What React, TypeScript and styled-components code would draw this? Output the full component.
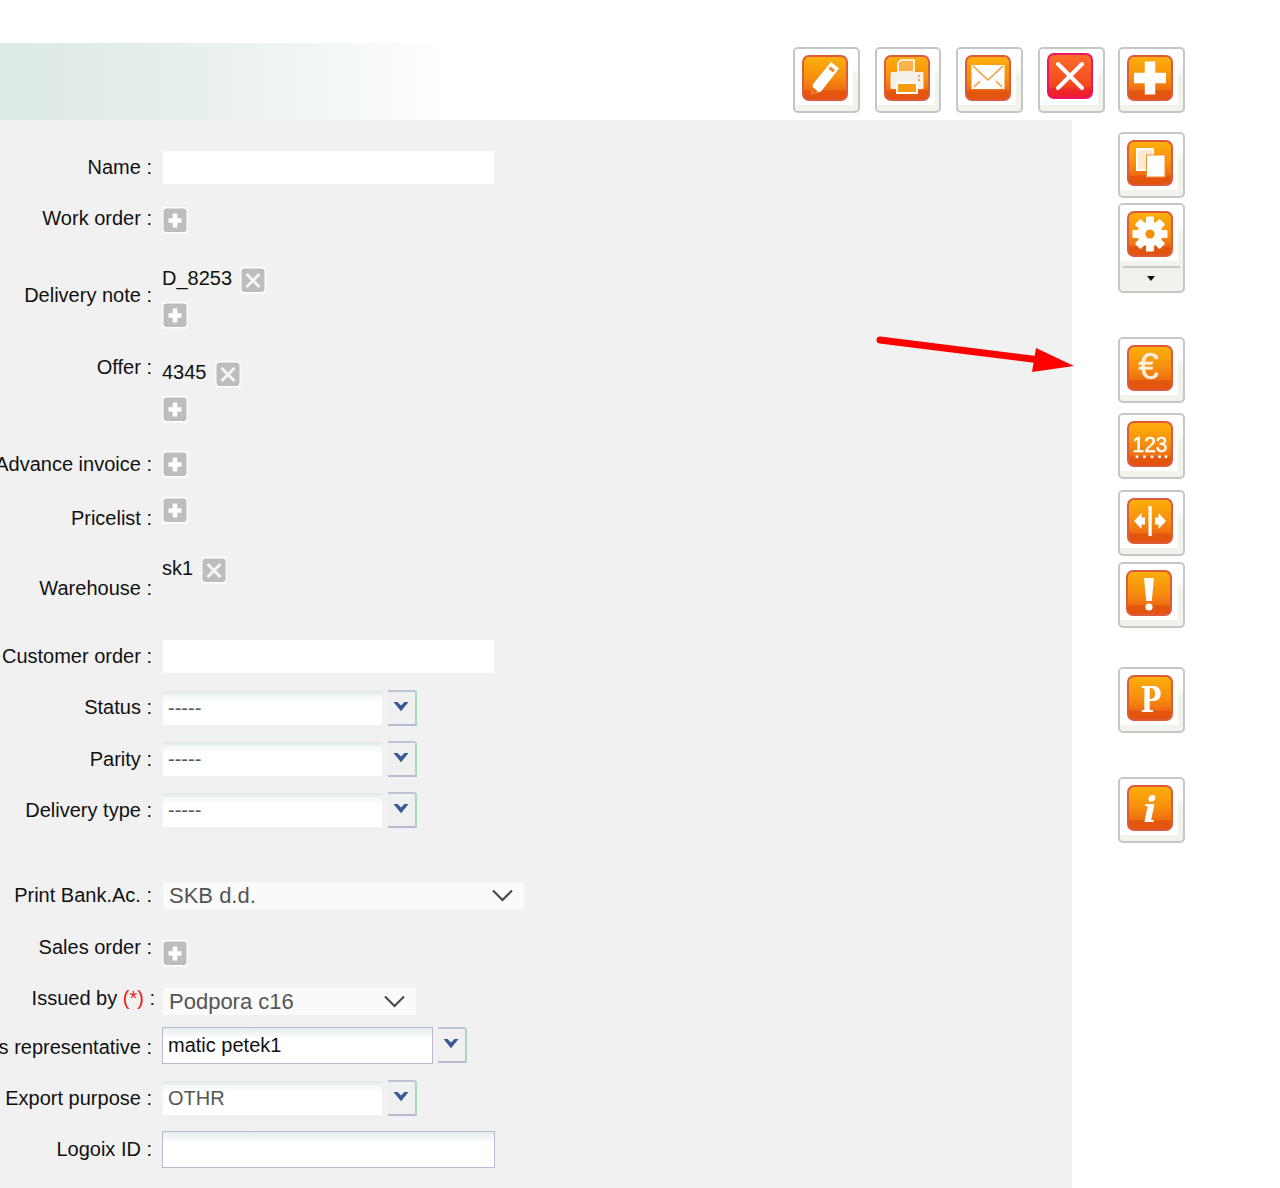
import React from 'react';
import styled, { createGlobalStyle } from 'styled-components';

const Global = createGlobalStyle`
  html, body { margin: 0; padding: 0; background: #fff; }
  body { font-family: "Liberation Sans", Arial, sans-serif; color: #111; }
`;

const Page = styled.div`
  position: relative;
  width: 1280px;
  height: 1188px;
  overflow: hidden;
  background: #fff;
`;
const Header = styled.header`
  display: flex;
  height: 120px;
`;
const Band = styled.div`
  width: 445px;
  margin-top: 43px;
  background: linear-gradient(to right, #dde9e6 0%, #e8f0ed 45%, #f5f9f7 80%, #ffffff 100%);
`;
const Toolbar = styled.div`
  display: flex;
  gap: 15px;
  margin-left: auto;
  padding: 47px 95px 0 0;
  align-items: flex-start;
`;
const Body = styled.div`
  display: flex;
`;
const Panel = styled.main`
  width: 1072px;
  height: 1068px;
  box-sizing: border-box;
  padding-top: 31px;
  background: #f1f1f1;
`;
const Side = styled.aside`
  display: flex;
  flex-direction: column;
  align-items: flex-start;
  margin-left: 46px;
  padding-top: 12px;
`;

const ToolButton = styled.div<{ $width?: number; $mt?: number; $ml?: number }>`
  box-sizing: border-box;
  width: ${p => p.$width ?? 67}px;
  height: 66px;
  margin-top: ${p => p.$mt ?? 0}px;
  margin-left: ${p => p.$ml ?? 0}px;
  flex: none;
  border: 2px solid #c6c6c6;
  border-radius: 5px;
  background: linear-gradient(to bottom, #fff 0 28%, #f0f2ec 45%, #f1f3ec 100%);
  overflow: hidden;
`;
const Face = styled.div<{ $left?: number; $top?: number }>`
  box-sizing: border-box;
  width: 58px;
  height: 56px;
  padding: ${p => p.$top ?? 6}px 0 0 ${p => p.$left ?? 7}px;
  background: #fff;
`;
const MenuButton = styled(ToolButton)`
  height: 90px;
  background: #f1f2ec;
`;
const MenuTop = styled.div`
  height: 61px;
  background: linear-gradient(to bottom, #fff 0 30%, #f0f2ec 50%, #f1f3ec 100%);
`;
const MenuDivider = styled.div`
  height: 2px;
  margin: 0 3px;
  background: #c9c9c9;
`;
const Caret = styled.div`
  width: 0;
  height: 0;
  margin: 8px 0 0 27px;
  border-left: 4px solid transparent;
  border-right: 4px solid transparent;
  border-top: 5px solid #111;
`;

const Row = styled.div<{ $mt: number; $h: number }>`
  display: grid;
  grid-template-columns: 152px 1fr;
  column-gap: 10px;
  margin-top: ${p => p.$mt}px;
  height: ${p => p.$h}px;
`;
const Label = styled.label<{ $top: number; $nudge?: number }>`
  display: flex;
  justify-content: flex-end;
  white-space: pre;
  height: 24px;
  margin-top: ${p => p.$top}px;
  margin-right: ${p => -(p.$nudge ?? 0)}px;
  font-size: 20px;
  line-height: 24px;
  color: #111;
`;
const Required = styled.span`
  color: #f01818;
`;
const Stack = styled.div`
  display: flex;
  flex-direction: column;
  align-items: flex-start;
  gap: 9px;
`;
const Inline = styled.div`
  display: flex;
  align-items: center;
  height: 26px;
`;
const ValueText = styled.span`
  margin: 0 8px 5px 0;
  font-size: 20px;
  line-height: 24px;
  color: #111;
`;
const PlainInput = styled.div`
  width: 331px;
  height: 33px;
  margin-left: 1px;
  background: #fff;
`;
const Combo = styled.div`
  display: flex;
  align-items: flex-start;
`;
const ComboField = styled.div`
  box-sizing: border-box;
  width: 219px;
  height: 34px;
  margin: 1px 0 0 1px;
  padding-left: 5px;
  font-size: 20px;
  line-height: 35px;
  color: #555;
  background: linear-gradient(to bottom, #dde5e5 0, #f4f8f8 5px, #fff 12px);
`;
const BorderedField = styled.div<{ $width: number }>`
  box-sizing: border-box;
  width: ${p => p.$width}px;
  height: 37px;
  padding-left: 5px;
  border: 1.5px solid #b7bad0;
  font-size: 20px;
  line-height: 35px;
  color: #111;
  background: linear-gradient(to bottom, #e6ecec 0, #fff 11px);
`;
const ComboButton = styled.div<{ $ml: number }>`
  display: flex;
  align-items: center;
  justify-content: center;
  box-sizing: border-box;
  width: 29px;
  height: 36px;
  margin-left: ${p => p.$ml}px;
  padding: 0 2px 3px 0;
  border-top: 2px solid #c0c3d6;
  border-bottom: 2px solid #b7bad0;
  border-right: 2px solid #a3dbb3;
  border-top-right-radius: 3px;
  background: #f0f0f0;
`;
const NativeSelect = styled.div<{ $width: number }>`
  display: flex;
  align-items: center;
  justify-content: space-between;
  box-sizing: border-box;
  width: ${p => p.$width}px;
  height: 27px;
  margin-left: 1px;
  padding: 0 11px 0 6px;
  font-size: 22px;
  line-height: 27px;
  color: #555;
  background: #fafafa;
`;
const Arrow = styled.svg`
  position: absolute;
  left: 870px;
  top: 330px;
`;
const FieldIcon = styled.svg<{ $lift?: number }>`
  display: block;
  flex: none;
  margin-top: ${p => -(p.$lift ?? 0)}px;
  filter: blur(0.3px);
`;
const ChevronIcon = styled.svg`
  display: block;
  flex: none;
`;
const ButtonIcon = styled.svg`
  display: block;
  filter: blur(0.4px);
`;

const SmallIcon = ({ kind, lift }: { kind: 'plus' | 'x'; lift?: number }) => (
  <FieldIcon width="26" height="27" viewBox="0 0 26 27" $lift={lift}>
    <rect x="0.5" y="0" width="25" height="26.5" fill="#fff" />
    <rect x="1.5" y="1.5" width="23" height="23.5" rx="3" fill="#bdbdbd" />
    {kind === 'plus' ? (
      <path d="M13 6.5v14M6.5 13.5h13" stroke="#fff" strokeWidth="4.6" fill="none" />
    ) : (
      <path d="M6.5 7l13 13M19.5 7L6.5 20" stroke="#f6f6f6" strokeWidth="3" fill="none" />
    )}
  </FieldIcon>
);

const Chevron = () => (
  <ChevronIcon width="16" height="11" viewBox="0 0 16 11">
    <path d="M0.5 1h4L8 4.6 11.5 1h4L8 10.2z" fill="#3a5893" />
  </ChevronIcon>
);
const ThinChevron = () => (
  <ChevronIcon width="21" height="13" viewBox="0 0 21 13">
    <path d="M1 1.5l9.5 9.5L20 1.5" stroke="#444" strokeWidth="2" fill="none" />
  </ChevronIcon>
);

const Glyphs: Record<string, React.ReactNode> = {
  pencil: (
    <g>
      <path d="M29 7l8 6.5-18 23-10 3 2-10.5z" fill="#fff" />
      <path d="M28.5 11.5l4.5 3.6-2 2.4-4.5-3.6z" fill="#f58a2a" />
      <path d="M9 39.5l1.2-8 6.2 5.4z" fill="#ee6a14" />
    </g>
  ),
  printer: (
    <g>
      <path d="M14 8l3-3h13v12H14z" fill="#f9b24c" stroke="#fff" strokeWidth="1.6" />
      <rect x="6.5" y="17" width="33" height="17" rx="1.5" fill="#f4f1ea" />
      <circle cx="35" cy="21" r="1" fill="#f18a2a" />
      <circle cx="35" cy="25" r="1" fill="#f18a2a" />
      <rect x="12" y="27" width="22" height="12" fill="#fff" />
      <rect x="14" y="29" width="18" height="8" fill="#fb9c10" />
    </g>
  ),
  mail: (
    <g>
      <rect x="6.5" y="10" width="33" height="24" fill="#fff" />
      <path d="M8 11l15 14 15-14M9 32l6-6M37 32l-6-6" stroke="#f59a3e" strokeWidth="1.6" fill="none" />
    </g>
  ),
  x: <path d="M11 11l24 24M35 11L11 35" stroke="#fff" strokeWidth="4" strokeLinecap="round" fill="none" />,
  plus: <path d="M23 6.5v33M7 23h32" stroke="#fff" strokeWidth="10.5" fill="none" />,
  copy: (
    <g>
      <rect x="10" y="9" width="16" height="21" fill="#fde8d0" stroke="#fff" strokeWidth="2" />
      <rect x="19.5" y="15" width="18.5" height="22" fill="#fff" stroke="#f29033" strokeWidth="1" />
    </g>
  ),
  gear: (
    <g>
      {[0, 45, 90, 135].map(a => (
        <rect key={a} x="19" y="5.5" width="8" height="35" rx="1" fill="#fff" transform={`rotate(${a} 23 23)`} />
      ))}
      <circle cx="23" cy="23" r="12.5" fill="#fff" />
      <circle cx="23" cy="23" r="4.6" fill="#f68f0c" />
    </g>
  ),
  euro: (
    <text x="21.5" y="34" textAnchor="middle" fontFamily="Liberation Sans, sans-serif" fontSize="37" fill="#fdeede" stroke="#fdeede" strokeWidth="0.4">
      €
    </text>
  ),
  numbers: (
    <g>
      <text x="23" y="31" textAnchor="middle" fontFamily="Liberation Sans, sans-serif" fontSize="22" fill="#fff" stroke="#fff" strokeWidth="0.5" textLength="35" lengthAdjust="spacingAndGlyphs">
        123
      </text>
      {[10, 17.5, 25, 32.5, 39].map(x => (
        <rect key={x} x={x - 1.3} y="34.5" width="2.6" height="2.6" fill="#fff" />
      ))}
    </g>
  ),
  split: (
    <g>
      <rect x="21.5" y="8" width="3.2" height="30" fill="#fff" />
      <path d="M7 23l7.5-8v4.5H18v7h-3.5V31zM39 23l-7.5-8v4.5H28v7h3.5V31z" fill="#fff" />
    </g>
  ),
  alert: (
    <g>
      <path d="M18 8h10l-2.2 23h-5.6z" fill="#fff" />
      <circle cx="23" cy="37" r="3.6" fill="#fff" />
    </g>
  ),
  p: (
    <text x="24" y="37" textAnchor="middle" fontFamily="DejaVu Serif, serif" fontWeight="700" fontSize="36" fill="#fff" textLength="21" lengthAdjust="spacingAndGlyphs">
      P
    </text>
  ),
  info: (
    <text x="23" y="37" textAnchor="middle" fontFamily="DejaVu Serif, serif" fontWeight="700" fontStyle="italic" fontSize="36" fill="#fff">
      i
    </text>
  ),
};

const OrangeIcon = ({ name, red }: { name: string; red?: boolean }) => {
  const id = `grad-${name}`;
  return (
    <ButtonIcon width="46" height="46" viewBox="0 0 46 46">
      <defs>
        <linearGradient id={id} x1="0" y1="0" x2="0" y2="1">
          {red ? (
            <>
              <stop offset="0" stopColor="#fb6f2b" />
              <stop offset="0.72" stopColor="#f4481d" />
              <stop offset="0.8" stopColor="#ef2a25" />
              <stop offset="1" stopColor="#ee1830" />
            </>
          ) : (
            <>
              <stop offset="0" stopColor="#fdb00c" />
              <stop offset="0.5" stopColor="#f68e0e" />
              <stop offset="0.76" stopColor="#ee6f12" />
              <stop offset="0.8" stopColor="#e3560e" />
              <stop offset="1" stopColor="#e2540e" />
            </>
          )}
        </linearGradient>
      </defs>
      <rect x="1" y="1" width="44" height="44" rx="6" fill={`url(#${id})`} stroke={red ? '#ef1463' : '#de5a3c'} strokeWidth="2" />
      {Glyphs[name]}
    </ButtonIcon>
  );
};

export default function App() {
  return (
    <Page>
      <Global />
      <Header>
        <Band />
        <Toolbar>
          <ToolButton><Face><OrangeIcon name="pencil" /></Face></ToolButton>
          <ToolButton $width={66}><Face><OrangeIcon name="printer" /></Face></ToolButton>
          <ToolButton><Face><OrangeIcon name="mail" /></Face></ToolButton>
          <ToolButton><Face $top={4}><OrangeIcon name="x" red /></Face></ToolButton>
          <ToolButton $ml={-2}><Face><OrangeIcon name="plus" /></Face></ToolButton>
        </Toolbar>
      </Header>
      <Body>
        <Panel>
          <Row $mt={0} $h={33}>
            <Label $top={4}>Name :</Label>
            <PlainInput />
          </Row>
          <Row $mt={24} $h={26}>
            <Label $top={-2}>Work order :</Label>
            <SmallIcon kind="plus" lift={1} />
          </Row>
          <Row $mt={33} $h={62}>
            <Label $top={16}>Delivery note :</Label>
            <Stack>
              <Inline><ValueText>D_8253</ValueText><SmallIcon kind="x" /></Inline>
              <SmallIcon kind="plus" />
            </Stack>
          </Row>
          <Row $mt={32} $h={62}>
            <Label $top={-6}>Offer :</Label>
            <Stack>
              <Inline><ValueText>4345</ValueText><SmallIcon kind="x" /></Inline>
              <SmallIcon kind="plus" />
            </Stack>
          </Row>
          <Row $mt={29} $h={26}>
            <Label $top={0}>Advance invoice :</Label>
            <SmallIcon kind="plus" lift={1} />
          </Row>
          <Row $mt={20} $h={26}>
            <Label $top={8}>Pricelist :</Label>
            <SmallIcon kind="plus" lift={1} />
          </Row>
          <Row $mt={33} $h={26}>
            <Label $top={19}>Warehouse :</Label>
            <Inline><ValueText>sk1</ValueText><SmallIcon kind="x" /></Inline>
          </Row>
          <Row $mt={57} $h={33}>
            <Label $top={4}>Customer order :</Label>
            <PlainInput />
          </Row>
          <Row $mt={17} $h={36}>
            <Label $top={5}>Status :</Label>
            <Combo><ComboField>-----</ComboField><ComboButton $ml={6}><Chevron /></ComboButton></Combo>
          </Row>
          <Row $mt={15} $h={36}>
            <Label $top={6}>Parity :</Label>
            <Combo><ComboField>-----</ComboField><ComboButton $ml={6}><Chevron /></ComboButton></Combo>
          </Row>
          <Row $mt={15} $h={36}>
            <Label $top={6}>Delivery type :</Label>
            <Combo><ComboField>-----</ComboField><ComboButton $ml={6}><Chevron /></ComboButton></Combo>
          </Row>
          <Row $mt={54} $h={27}>
            <Label $top={1}>Print Bank.Ac. :</Label>
            <NativeSelect $width={361}>SKB d.d.<ThinChevron /></NativeSelect>
          </Row>
          <Row $mt={32} $h={26}>
            <Label $top={-6}>Sales order :</Label>
            <SmallIcon kind="plus" lift={1} />
          </Row>
          <Row $mt={21} $h={27}>
            <Label $top={-2} $nudge={3}>Issued by <Required>(*)</Required> :</Label>
            <NativeSelect $width={253}>Podpora c16<ThinChevron /></NativeSelect>
          </Row>
          <Row $mt={12} $h={37}>
            <Label $top={8}>Sales representative :</Label>
            <Combo><BorderedField $width={271}>matic petek1</BorderedField><ComboButton $ml={5}><Chevron /></ComboButton></Combo>
          </Row>
          <Row $mt={16} $h={36}>
            <Label $top={6}>Export purpose :</Label>
            <Combo><ComboField>OTHR</ComboField><ComboButton $ml={6}><Chevron /></ComboButton></Combo>
          </Row>
          <Row $mt={15} $h={37}>
            <Label $top={6}>Logoix ID :</Label>
            <BorderedField $width={333} />
          </Row>
        </Panel>
        <Side>
          <ToolButton><Face><OrangeIcon name="copy" /></Face></ToolButton>
          <MenuButton $mt={5}>
            <MenuTop><Face><OrangeIcon name="gear" /></Face></MenuTop>
            <MenuDivider />
            <Caret />
          </MenuButton>
          <ToolButton $mt={44}><Face><OrangeIcon name="euro" /></Face></ToolButton>
          <ToolButton $mt={10}><Face><OrangeIcon name="numbers" /></Face></ToolButton>
          <ToolButton $mt={11}><Face><OrangeIcon name="split" /></Face></ToolButton>
          <ToolButton $mt={6}><Face $left={6}><OrangeIcon name="alert" /></Face></ToolButton>
          <ToolButton $mt={39}><Face><OrangeIcon name="p" /></Face></ToolButton>
          <ToolButton $mt={44}><Face><OrangeIcon name="info" /></Face></ToolButton>
        </Side>
      </Body>
      <Arrow width="210" height="50" viewBox="870 330 210 50">
        <path d="M880 340L1040 360" stroke="#ff0000" strokeWidth="7" strokeLinecap="round" fill="none" />
        <path d="M1036 348L1074 366 1032 372z" fill="#ff0000" />
      </Arrow>
    </Page>
  );
}
